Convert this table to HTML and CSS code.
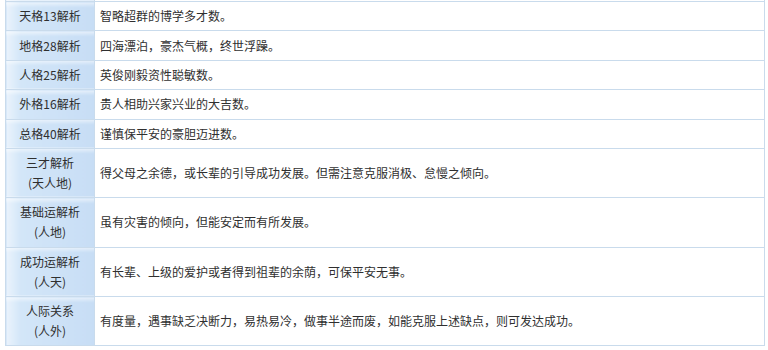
FILE: index.html
```html
<!DOCTYPE html>
<html lang="zh">
<head>
<meta charset="utf-8">
<link rel="stylesheet" href="styles.css">
</head>
<body>
<table class="jx">
<colgroup><col class="c1"><col class="c2"></colgroup>
<tr class="cut"><th></th><td></td></tr>
<tr><th>天格13解析</th><td>智略超群的博学多才数。</td></tr>
<tr><th>地格28解析</th><td>四海漂泊，豪杰气概，终世浮躁。</td></tr>
<tr><th>人格25解析</th><td>英俊刚毅资性聪敏数。</td></tr>
<tr><th>外格16解析</th><td>贵人相助兴家兴业的大吉数。</td></tr>
<tr><th>总格40解析</th><td>谨慎保平安的豪胆迈进数。</td></tr>
<tr><th>三才解析<br>(天人地)</th><td>得父母之余德，或长辈的引导成功发展。但需注意克服消极、怠慢之倾向。</td></tr>
<tr><th>基础运解析<br>(人地)</th><td>虽有灾害的倾向，但能安定而有所发展。</td></tr>
<tr><th>成功运解析<br>(人天)</th><td>有长辈、上级的爱护或者得到祖辈的余荫，可保平安无事。</td></tr>
<tr><th>人际关系<br>(人外)</th><td>有度量，遇事缺乏决断力，易热易冷，做事半途而废，如能克服上述缺点，则可发达成功。</td></tr>
</table>
</body>
</html>
```
FILE: styles.css
```css
html, body {
  margin: 0;
  padding: 0;
  background: #fff;
}
.jx {
  margin: 0 0 0 5px;
  width: 760px;
  border-collapse: collapse;
  table-layout: fixed;
  font-family: "Noto Sans CJK SC", "Noto Sans", sans-serif;
  font-size: 12px;
  color: #2f2f2f;
}
.c1 { width: 89px; }
.jx th, .jx td {
  border: 1px solid #c9dbec;
  padding: 4.2px 5px;
  line-height: 20px;
}
.jx th {
  font-weight: normal;
  text-align: center;
  padding: 4.2px 2px;
  background:
    linear-gradient(to bottom, rgba(255,255,255,0.55) 0, rgba(255,255,255,0) 5px),
    linear-gradient(to right, #eaf3fc 0, #d3e6f8 14px, #c7ddf5 100%);
}
.jx td {
  text-align: left;
}
.jx .cut th, .jx .cut td {
  height: 1px;
  padding: 0;
  line-height: 0;
  border-top: 0;
}
```
